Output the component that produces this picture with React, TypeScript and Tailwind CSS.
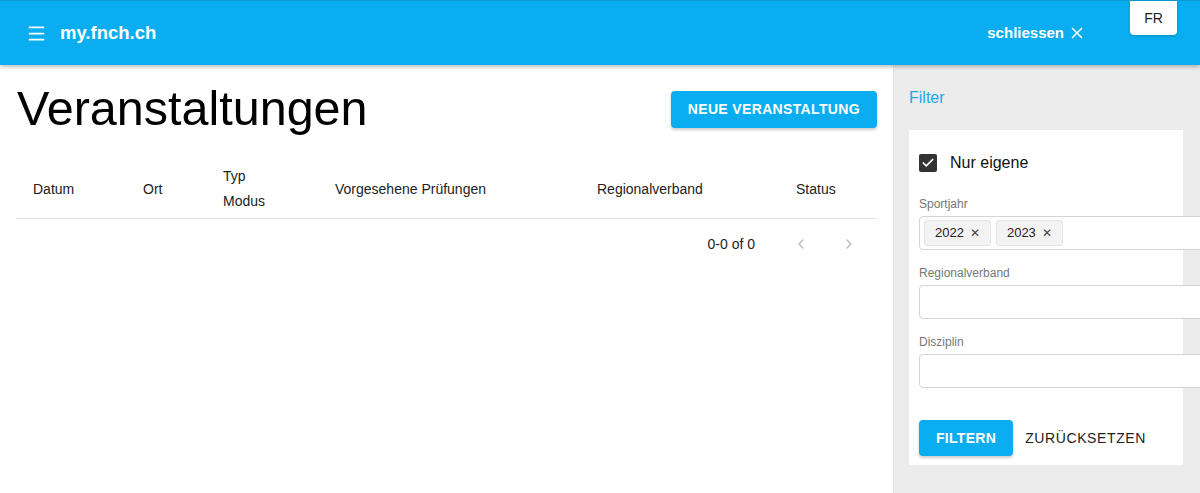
import React from 'react';
import { Menu, X, ChevronLeft, ChevronRight, Check } from 'lucide-react';

const columns = [
  { label: 'Datum', w: 'w-[110px]' },
  { label: 'Ort', w: 'w-[80px]' },
  { label: 'Typ\nModus', w: 'w-[112px]' },
  { label: 'Vorgesehene Prüfungen', w: 'w-[262px]' },
  { label: 'Regionalverband', w: 'w-[199px]' },
  { label: 'Status', w: 'w-[80px]' },
];

const Chip: React.FC<{ label: string }> = ({ label }) => (
  <span className="flex items-center h-[26px] px-[10px] gap-[6px] bg-[#f3f3f3] border border-[#e4e4e4] rounded-[3px] text-[13px] text-[#222]">
    {label}
    <span className="text-[12px] text-[#444]">✕</span>
  </span>
);

const Field: React.FC<{ label: string; children?: React.ReactNode }> = ({ label, children }) => (
  <div className="flex flex-col">
    <label className="text-[12px] text-[#777] h-[20px] leading-[20px] mb-[2px]">{label}</label>
    <div className="w-[300px] h-[34px] border border-[#d4d4d4] rounded-[4px] bg-white flex items-center gap-[5px] px-[4px]">
      {children}
    </div>
  </div>
);

export default function App() {
  return (
    <div className="w-[1200px] h-[493px] flex flex-col overflow-hidden bg-white font-['Liberation_Sans',Arial,sans-serif]">
      <header className="relative z-10 h-[65px] shrink-0 bg-[#0aaef0] border-t border-[#0a9ad6] shadow-[0_2px_4px_rgba(0,0,0,0.25)] flex items-center pl-[26px] pr-[23px]">
        <Menu className="w-[21px] h-[21px] text-white" strokeWidth={2} />
        <span className="ml-[13px] text-white font-bold text-[18.5px]">my.fnch.ch</span>
        <div className="flex-1" />
        <span className="text-white font-bold text-[15px] flex items-center gap-[4px]">
          schliessen
          <X className="w-[18px] h-[18px]" strokeWidth={2} />
        </span>
        <div className="self-start ml-[44px] w-[47px] h-[34px] bg-white rounded-b-[4px] shadow-[0_1px_3px_rgba(0,0,0,0.2)] flex items-center justify-center text-[14px] text-[#222]">
          FR
        </div>
      </header>
      <div className="flex flex-1 min-h-0">
        <main className="w-[893px] shrink-0 pl-[16px] pr-[16px]">
          <div className="flex items-start justify-between pt-[15px]">
            <h1 className="text-[48.5px] leading-[56px] text-black ml-[1px]">Veranstaltungen</h1>
            <button className="mt-[11px] h-[37px] px-[17px] rounded-[4px] bg-[#0aaef0] text-white font-bold text-[14px] tracking-[0.35px] shadow-[0_2px_3px_rgba(0,0,0,0.2)]">
              NEUE VERANSTALTUNG
            </button>
          </div>
          <div className="mt-[24px] h-[59px] border-b border-[#e2e2e2] flex items-center pl-[17px]">
            {columns.map((c) => (
              <div key={c.label} className={`${c.w} text-[14px] text-[#222] leading-[25px] whitespace-pre`}>
                {c.label}
              </div>
            ))}
          </div>
          <div className="flex items-center justify-end h-[50px] pr-[20px] text-[14px] text-[#222]">
            <span>0-0 of 0</span>
            <ChevronLeft className="ml-[38px] w-[16px] h-[16px] text-[#bbb]" />
            <ChevronRight className="ml-[32px] w-[16px] h-[16px] text-[#bbb]" />
          </div>
        </main>
        <aside className="flex-1 bg-[#ececec] border-l border-[#e2e2e2] pl-[15px] overflow-hidden">
          <div className="pt-[21px] h-[65px] text-[16px] text-[#1ea7e8]">Filter</div>
          <div className="w-[274px] h-[335px] bg-white pl-[10px] pt-[21px]">
            <div className="flex items-center gap-[13px]">
              <span className="w-[18px] h-[18px] bg-[#333] rounded-[2px] flex items-center justify-center">
                <Check className="w-[14px] h-[14px] text-white" strokeWidth={3} />
              </span>
              <span className="text-[16px] text-[#111]">Nur eigene</span>
            </div>
            <div className="mt-[19px] flex flex-col gap-[13px]">
              <Field label="Sportjahr">
                <Chip label="2022" />
                <Chip label="2023" />
              </Field>
              <Field label="Regionalverband" />
              <Field label="Disziplin" />
            </div>
            <div className="mt-[32px] flex items-center gap-[12px]">
              <button className="h-[36px] px-[17px] rounded-[4px] bg-[#0aaef0] text-white font-bold text-[14px] tracking-[0.3px] shadow-[0_2px_3px_rgba(0,0,0,0.2)]">
                FILTERN
              </button>
              <button className="h-[36px] text-[14px] text-[#222] tracking-[0.6px]">ZURÜCKSETZEN</button>
            </div>
          </div>
        </aside>
      </div>
    </div>
  );
}
